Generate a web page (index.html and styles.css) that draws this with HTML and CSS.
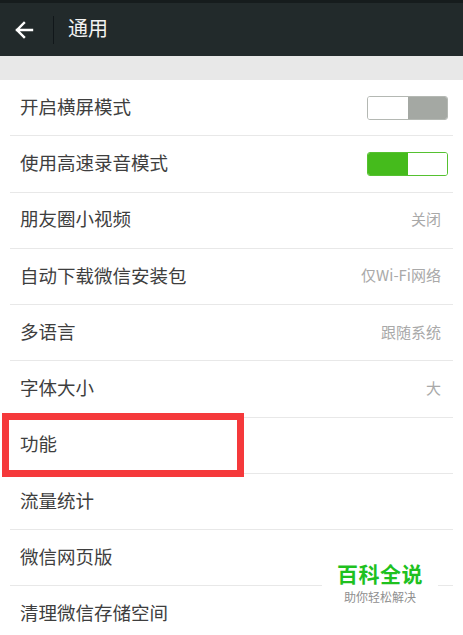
FILE: index.html
```html
<!DOCTYPE html>
<html lang="zh">
<head>
<meta charset="utf-8">
<link rel="stylesheet" href="styles.css">
</head>
<body>
<div class="page">
  <header class="topbar">
    <svg class="back" width="20" height="18" viewBox="0 0 20 18"><path d="M18 9H3M10 2L3 9l7 7" fill="none" stroke="#fff" stroke-width="2.4" stroke-linecap="square"/></svg>
    <span class="divider"></span>
    <span class="title">通用</span>
  </header>
  <div class="gap"></div>
  <ul class="list">
    <li class="row"><span class="label">开启横屏模式</span><span class="toggle off"><span class="knob"></span><span class="track"></span></span></li>
    <li class="row"><span class="label">使用高速录音模式</span><span class="toggle on"><span class="track"></span><span class="knob"></span></span></li>
    <li class="row"><span class="label">朋友圈小视频</span><span class="value">关闭</span></li>
    <li class="row"><span class="label">自动下载微信安装包</span><span class="value">仅Wi-Fi网络</span></li>
    <li class="row"><span class="label">多语言</span><span class="value">跟随系统</span></li>
    <li class="row"><span class="label">字体大小</span><span class="value">大</span></li>
    <li class="row"><span class="label">功能</span></li>
    <li class="row"><span class="label">流量统计</span></li>
    <li class="row"><span class="label">微信网页版</span></li>
    <li class="row"><span class="label">清理微信存储空间</span></li>
  </ul>
  <div class="highlight"></div>
  <div class="watermark">
    <div class="wm-title">百科全说</div>
    <div class="wm-sub">助你轻松解决</div>
  </div>
</div>
</body>
</html>
```

FILE: styles.css
```css
* { box-sizing: border-box; }
html, body { margin: 0; padding: 0; }
body {
  background: #fff;
  font-family: "Noto Sans CJK SC", "Noto Sans", sans-serif;
  width: 463px;
  height: 635px;
  overflow: hidden;
}
.page { position: relative; width: 463px; height: 635px; overflow: hidden; }
.topbar {
  height: 56px;
  background: #222a2b;
  border-top: 3px solid #161c1d;
  display: flex;
  align-items: center;
  padding-left: 14px;
}
.back { display: block; margin-top: 1px; }
.divider {
  width: 1px;
  height: 28px;
  background: #11171a;
  margin-left: 19px;
  margin-right: 14px;
}
.title {
  color: #f2f2f2;
  font-size: 20px;
  line-height: 1;
  margin-top: -3px;
}
.gap { height: 24px; background: #e8e8e8; }
.list { list-style: none; margin: 0; padding: 0; }
.row {
  height: 56.25px;
  margin: 0 10px;
  padding: 0 12px 0 10px;
  border-bottom: 1px solid #e8e8e8;
  display: flex;
  align-items: center;
  justify-content: space-between;
}
.label { font-size: 18.5px; color: #3e3e3e; line-height: 1; margin-top: -3px; }
.value { font-size: 15px; color: #a9a9a9; line-height: 1; margin-top: -3px; }
.toggle {
  width: 81px;
  height: 24px;
  display: flex;
  border-radius: 3px;
  overflow: hidden;
  margin-right: -7px;
}
.toggle.off { border: 1px solid #b4b8b3; }
.toggle.on { border: 1px solid #55c130; }
.toggle .knob { flex: 1; background: #fff; }
.toggle.off .track { flex: 1; background: #a4a8a3; }
.toggle.on .track { flex: 1; background: #45bb1c; }
.highlight {
  position: absolute;
  left: 2px;
  top: 413px;
  width: 242px;
  height: 64px;
  border: 7px solid #f5393b;
}
.watermark {
  position: absolute;
  left: 322px;
  top: 563px;
  width: 116px;
  background: #fff;
  text-align: center;
  padding-bottom: 4px;
}
.wm-title {
  font-size: 21px;
  font-weight: 700;
  color: #1fc11f;
  line-height: 21px;
  letter-spacing: 0.5px;
}
.wm-sub {
  font-size: 12px;
  color: #8f8f8f;
  line-height: 12px;
  margin-top: 7px;
}
```
